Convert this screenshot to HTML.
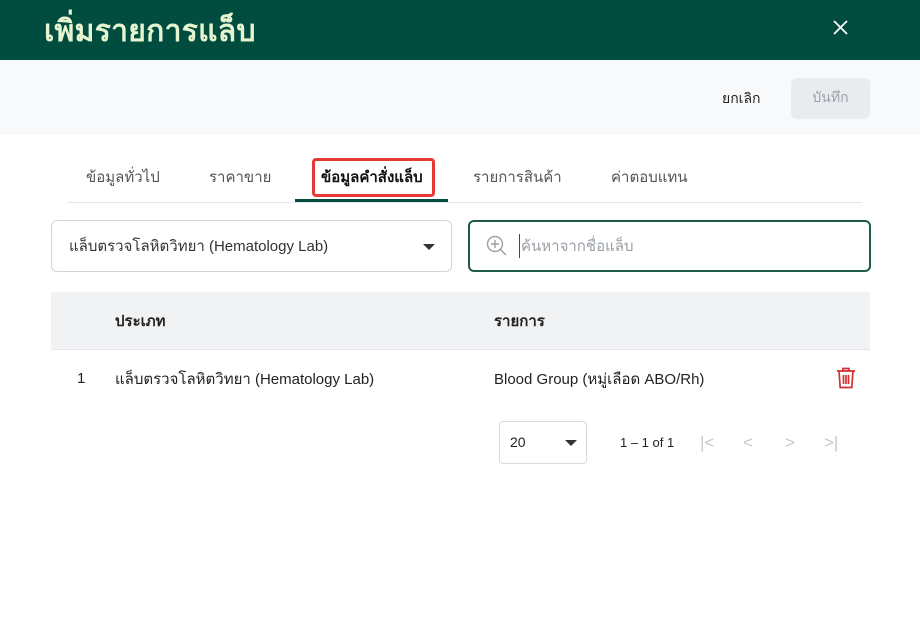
<!DOCTYPE html>
<html><head><meta charset="utf-8"><style>
*{box-sizing:border-box;margin:0;padding:0}
body{width:920px;height:619px;overflow:hidden;background:#fff;font-family:"Liberation Sans","Noto Sans CJK SC",sans-serif;color:#222;position:relative}
.hdr{position:absolute;left:0;top:0;width:920px;height:60px;background:#004d40}
.hdr h1{position:absolute;left:44px;top:8px;font-size:30px;font-weight:bold;color:#e6f5d0;letter-spacing:0.3px}
.x{position:absolute;left:832px;top:19px}
.bar{position:absolute;left:0;top:60px;width:920px;height:75px;background:#f8f9fa}
.cancel{position:absolute;left:722px;top:88px;font-size:14px;color:#222}
.save{position:absolute;left:791px;top:78px;width:79px;height:41px;background:#e9ebee;border-radius:6px;color:#9aa2ab;font-size:14px;text-align:center;line-height:38px}
.tabs{position:absolute;left:67px;top:202px;width:795px;height:1px;background:#e3e6ea}
.tab{position:absolute;top:165px;font-size:15px;color:#555}
.act{position:absolute;left:295px;top:199px;width:153px;height:3px;background:#004d40}
.red{position:absolute;left:312px;top:158px;width:123px;height:39px;border:3px solid #e53935;border-radius:4px}
.sel{position:absolute;left:51px;top:220px;width:401px;height:52px;border:1px solid #cfd4d9;border-radius:6px}
.sel span{position:absolute;left:17px;top:13px;font-size:15px;color:#333}
.tri{position:absolute;width:0;height:0;border-left:6px solid transparent;border-right:6px solid transparent;border-top:6px solid #333}
.srch{position:absolute;left:468px;top:220px;width:403px;height:52px;border:2px solid #1f5a4a;border-radius:6px}
.srch span{position:absolute;left:49px;top:12px;font-size:15px;color:#9aa0a6;border-left:1px solid #1f5a4a;padding-left:1px}
.th{position:absolute;left:51px;top:292px;width:819px;height:58px;background:#f1f2f4;border-bottom:1px solid #e3e6ea}
.b{font-weight:bold;font-size:15px;color:#222;position:absolute}
.t{position:absolute;font-size:15px;color:#222}
.pg{position:absolute;left:499px;top:421px;width:88px;height:43px;border:1px solid #d6d9dd;border-radius:4px}
.arr{position:absolute;top:433px;font-size:17px;color:#c4c8cc}
</style></head><body>
<div class="hdr"><h1>เพิ่มรายการแล็บ</h1>
<svg class="x" width="17" height="17" viewBox="0 0 17 17"><path d="M2 2L15 15M15 2L2 15" stroke="#fff" stroke-width="1.8"/></svg></div>
<div class="bar"></div>
<div class="cancel">ยกเลิก</div>
<div class="save">บันทึก</div>
<div class="tabs"></div>
<div class="tab" style="left:86px">ข้อมูลทั่วไป</div>
<div class="tab" style="left:209px">ราคาขาย</div>
<div class="tab" style="left:321px;color:#111;font-weight:bold">ข้อมูลคำสั่งแล็บ</div>
<div class="tab" style="left:473px">รายการสินค้า</div>
<div class="tab" style="left:611px">ค่าตอบแทน</div>
<div class="act"></div>
<div class="red"></div>
<div class="sel"><span>แล็บตรวจโลหิตวิทยา (Hematology Lab)</span><div class="tri" style="left:371px;top:23px"></div></div>
<div class="srch"><svg style="position:absolute;left:16px;top:13px" width="22" height="22" viewBox="0 0 22 22"><circle cx="9" cy="9" r="7.5" fill="none" stroke="#9aa0a6" stroke-width="1.4"/><path d="M9 5v8M5 9h8M14.5 14.5L20 20" stroke="#9aa0a6" stroke-width="1.4"/></svg><span>ค้นหาจากชื่อแล็บ</span></div>
<div class="th"></div>
<div class="b" style="left:115px;top:309px">ประเภท</div>
<div class="b" style="left:494px;top:309px">รายการ</div>
<div class="t" style="left:77px;top:370px">1</div>
<div class="t" style="left:115px;top:367px">แล็บตรวจโลหิตวิทยา (Hematology Lab)</div>
<div class="t" style="left:494px;top:367px">Blood Group (หมู่เลือด ABO/Rh)</div>
<svg style="position:absolute;left:836px;top:367px" width="20" height="22" viewBox="0 0 20 22"><path d="M1 4h18M7 4V1.5h6V4M3 4l1.2 16.5h11.6L17 4M7.5 8v9M10 8v9M12.5 8v9" fill="none" stroke="#d32f2f" stroke-width="1.7"/></svg>
<div class="pg"><span style="position:absolute;left:10px;top:12px;font-size:14px">20</span><div class="tri" style="left:65px;top:18px"></div></div>
<div class="t" style="left:620px;top:435px;font-size:13px">1 – 1 of 1</div>
<div class="arr" style="left:700px">|&lt;</div>
<div class="arr" style="left:743px">&lt;</div>
<div class="arr" style="left:785px">&gt;</div>
<div class="arr" style="left:824px">&gt;|</div>
</body></html>
